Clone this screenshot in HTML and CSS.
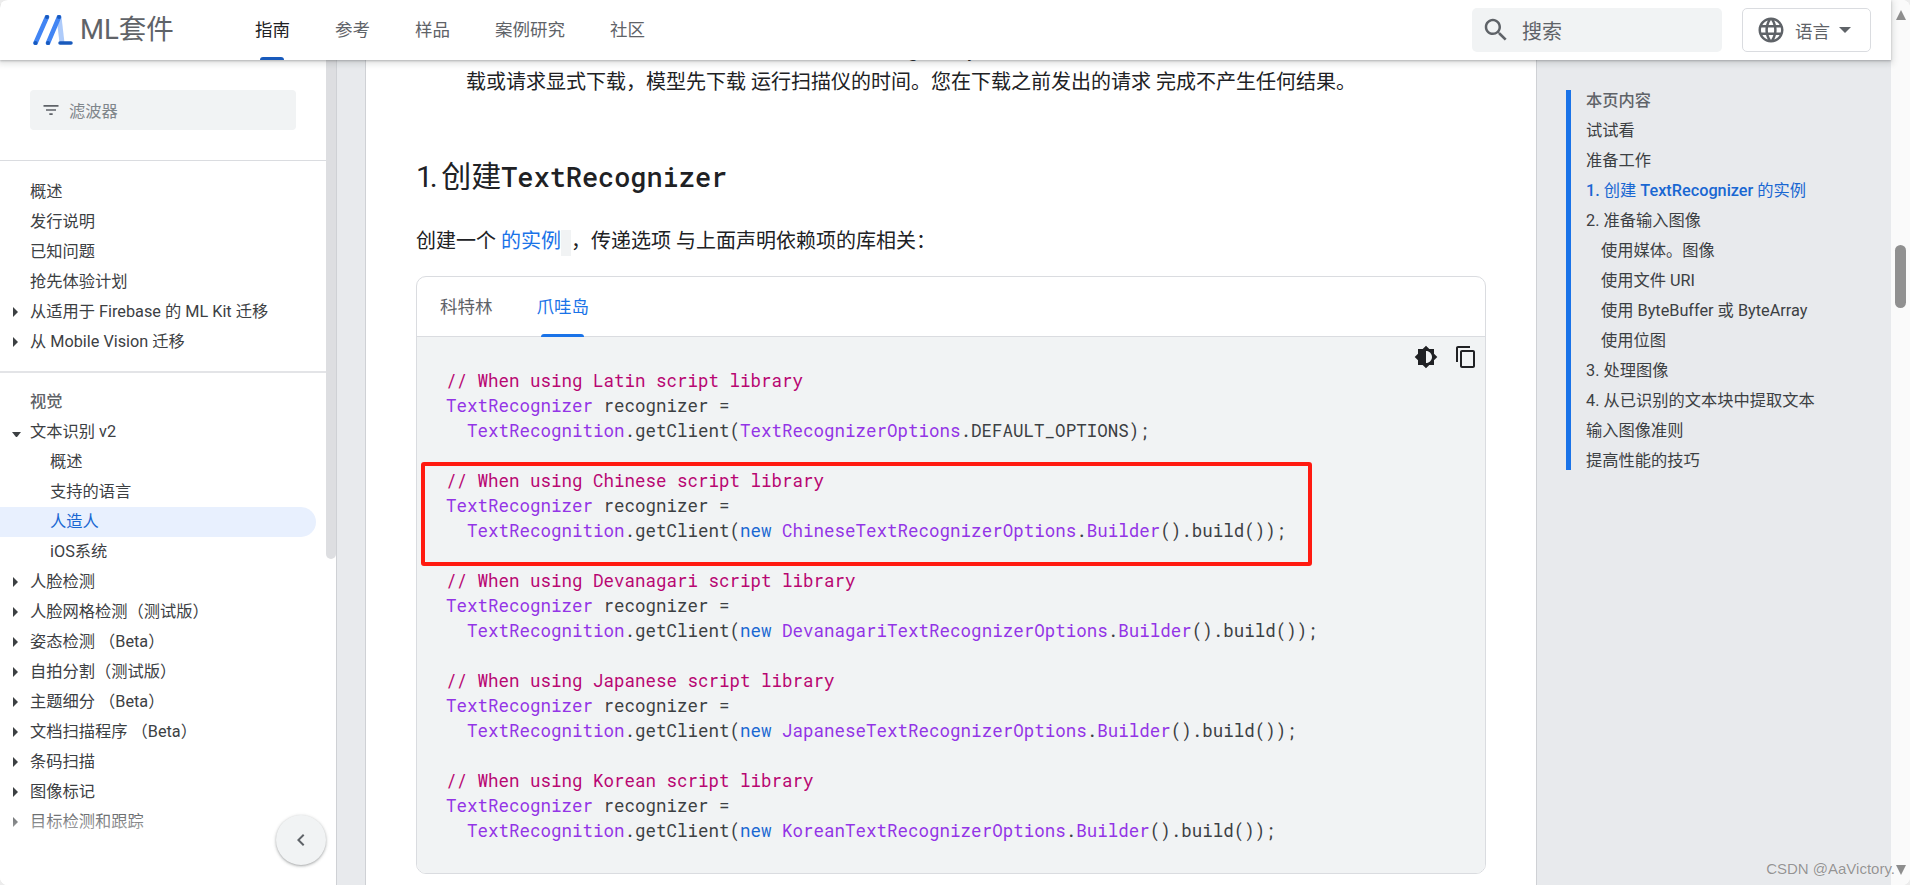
FILE: index.html
```html
<!DOCTYPE html>
<html lang="zh-CN">
<head>
<meta charset="utf-8">
<title>ML套件 - 文本识别 v2</title>
<link rel="stylesheet" href="styles.css">
</head>
<body>
<div class="page">
  <div class="main">
    <header class="topbar">
      <div class="brand">
        <svg class="brand-logo" width="40" height="30" viewBox="0 0 40 30" aria-hidden="true">
          <path d="M26 2 29 28" stroke="#aecbfa" stroke-width="5"/>
          <path d="M2.5 28 14 2" stroke="#4285f4" stroke-width="4.5" stroke-linecap="round"/>
          <path d="M15 28 26 2" stroke="#4285f4" stroke-width="4.5" stroke-linecap="round"/>
          <path d="M27 28H38" stroke="#185abc" stroke-width="3.5" stroke-linecap="round"/>
          <circle cx="2.5" cy="28" r="2" fill="#185abc"/><circle cx="15" cy="28" r="2" fill="#185abc"/>
          <circle cx="14" cy="2" r="2" fill="#185abc"/><circle cx="26" cy="2" r="2" fill="#185abc"/>
        </svg>
        <span class="brand-name">ML套件</span>
      </div>
      <nav class="tabs-top">
        <a class="top-link is-active">指南</a>
        <a class="top-link">参考</a>
        <a class="top-link">样品</a>
        <a class="top-link">案例研究</a>
        <a class="top-link">社区</a>
      </nav>
      <div class="search">
        <svg width="30" height="30" viewBox="0 0 24 24" fill="#5f6368" aria-hidden="true"><path d="M15.5 14h-.79l-.28-.27C15.41 12.59 16 11.11 16 9.5 16 5.91 13.09 3 9.5 3S3 5.91 3 9.5 5.91 16 9.5 16c1.61 0 3.09-.59 4.23-1.57l.27.28v.79l5 4.99L20.49 19l-4.99-5zm-6 0C7.01 14 5 11.99 5 9.5S7.01 5 9.5 5 14 7.01 14 9.5 11.99 14 9.5 14z"/></svg>
        <span>搜索</span>
      </div>
      <div class="lang">
        <svg width="30" height="30" viewBox="0 0 24 24" fill="#5f6368" aria-hidden="true"><path d="M11.99 2C6.47 2 2 6.48 2 12s4.47 10 9.99 10C17.52 22 22 17.52 22 12S17.52 2 11.99 2zm6.93 6h-2.95c-.32-1.25-.78-2.45-1.38-3.56 1.84.63 3.37 1.91 4.33 3.56zM12 4.04c.83 1.2 1.48 2.53 1.91 3.96h-3.82c.43-1.43 1.08-2.76 1.91-3.96zM4.26 14C4.1 13.36 4 12.69 4 12s.1-1.36.26-2h3.38c-.08.66-.14 1.32-.14 2s.06 1.34.14 2H4.26zm.82 2h2.95c.32 1.25.78 2.45 1.38 3.56-1.84-.63-3.37-1.9-4.33-3.56zm2.95-8H5.08c.96-1.66 2.49-2.93 4.33-3.56C8.81 5.55 8.35 6.75 8.03 8zM12 19.96c-.83-1.2-1.48-2.53-1.91-3.96h3.82c-.43 1.43-1.08 2.76-1.91 3.96zM14.34 14H9.66c-.09-.66-.16-1.32-.16-2s.07-1.35.16-2h4.68c.09.65.16 1.32.16 2s-.07 1.34-.16 2zm.25 5.56c.6-1.11 1.06-2.31 1.38-3.56h2.95c-.96 1.65-2.49 2.93-4.33 3.56zM16.36 14c.08-.66.14-1.32.14-2s-.06-1.34-.14-2h3.38c.16.64.26 1.31.26 2s-.1 1.36-.26 2h-3.38z"/></svg>
        <span>语言</span>
        <i class="lang-caret"></i>
      </div>
    </header>
    <div class="body-row">
      <aside class="sidebar">
        <div class="side-scroll">
          <div class="filter-wrap">
            <div class="filter">
              <svg width="20" height="20" viewBox="0 0 24 24" fill="#5f6368" aria-hidden="true"><path d="M10 18h4v-2h-4v2zM3 6v2h18V6H3zm3 7h12v-2H6v2z"/></svg>
              <span>滤波器</span>
            </div>
          </div>
          <ul class="side-list side-list-first">
            <li class="side-row">概述</li>
            <li class="side-row">发行说明</li>
            <li class="side-row">已知问题</li>
            <li class="side-row">抢先体验计划</li>
            <li class="side-row has-arrow"><i class="arrow-right"></i>从适用于 Firebase 的 ML Kit 迁移</li>
            <li class="side-row has-arrow"><i class="arrow-right"></i>从 Mobile Vision 迁移</li>
          </ul>
          <ul class="side-list side-list-second">
            <li class="side-row side-heading">视觉</li>
            <li class="side-row has-arrow"><i class="arrow-down"></i>文本识别 v2</li>
            <li class="side-row side-sub">概述</li>
            <li class="side-row side-sub">支持的语言</li>
            <li class="side-row side-sub is-current">人造人</li>
            <li class="side-row side-sub">iOS系统</li>
            <li class="side-row has-arrow"><i class="arrow-right"></i>人脸检测</li>
            <li class="side-row has-arrow"><i class="arrow-right"></i>人脸网格检测（测试版）</li>
            <li class="side-row has-arrow"><i class="arrow-right"></i>姿态检测 （Beta）</li>
            <li class="side-row has-arrow"><i class="arrow-right"></i>自拍分割（测试版）</li>
            <li class="side-row has-arrow"><i class="arrow-right"></i>主题细分 （Beta）</li>
            <li class="side-row has-arrow"><i class="arrow-right"></i>文档扫描程序 （Beta）</li>
            <li class="side-row has-arrow"><i class="arrow-right"></i>条码扫描</li>
            <li class="side-row has-arrow"><i class="arrow-right"></i>图像标记</li>
            <li class="side-row has-arrow"><i class="arrow-right"></i>目标检测和跟踪</li>
          </ul>
        </div>
        <div class="side-thumb"></div>
        <div class="side-fade"></div>
        <button class="collapse" aria-label="收起">
          <svg width="24" height="24" viewBox="0 0 24 24" fill="#5f6368" aria-hidden="true"><path d="M15.41 7.41 14 6l-6 6 6 6 1.41-1.41L10.83 12z"/></svg>
        </button>
      </aside>
      <div class="gutter"></div>
      <main class="content">
        <p class="note note-clipped">如果您没有在安装时启用模型下载，可以使用 Google Play 服务 ModuleInstallClient API 请求下</p>
        <p class="note">载或请求显式下载，模型先下载 运行扫描仪的时间。您在下载之前发出的请求 完成不产生任何结果。</p>
        <h3 class="step-title"><span class="step-num">1.</span> 创建<code>TextRecognizer</code></h3>
        <p class="intro">创建一个 <a class="link">的实例</a><span class="code-gap"></span>，传递选项 与上面声明依赖项的库相关：</p>
        <section class="code-card">
          <div class="code-tabs">
            <span class="code-tab">科特林</span>
            <span class="code-tab is-active">爪哇岛</span>
          </div>
          <div class="code-body">
            <div class="code-tools">
              <svg width="24" height="24" viewBox="0 0 24 24" fill="#202124" aria-hidden="true"><path d="M20 15.31 23.31 12 20 8.69V4h-4.69L12 .69 8.69 4H4v4.69L.69 12 4 15.31V20h4.69L12 23.31 15.31 20H20v-4.69zM12 18V6c3.31 0 6 2.69 6 6s-2.69 6-6 6z"/></svg>
              <svg width="24" height="24" viewBox="0 0 24 24" fill="#202124" aria-hidden="true"><path d="M16 1H4c-1.1 0-2 .9-2 2v14h2V3h12V1zm3 4H8c-1.1 0-2 .9-2 2v14c0 1.1.9 2 2 2h11c1.1 0 2-.9 2-2V7c0-1.1-.9-2-2-2zm0 16H8V7h11v14z"/></svg>
            </div>
            <div class="code">
              <div class="ln c">// When using Latin script library</div>
              <div class="ln"><span class="t">TextRecognizer</span> recognizer =</div>
              <div class="ln ind"><span class="t">TextRecognition</span>.getClient(<span class="t">TextRecognizerOptions</span>.DEFAULT_OPTIONS);</div>
              <div class="ln gap c">// When using Chinese script library</div>
              <div class="ln"><span class="t">TextRecognizer</span> recognizer =</div>
              <div class="ln ind"><span class="t">TextRecognition</span>.getClient(<span class="k">new</span> <span class="t">ChineseTextRecognizerOptions</span>.<span class="t">Builder</span>().build());</div>
              <div class="ln gap c">// When using Devanagari script library</div>
              <div class="ln"><span class="t">TextRecognizer</span> recognizer =</div>
              <div class="ln ind"><span class="t">TextRecognition</span>.getClient(<span class="k">new</span> <span class="t">DevanagariTextRecognizerOptions</span>.<span class="t">Builder</span>().build());</div>
              <div class="ln gap c">// When using Japanese script library</div>
              <div class="ln"><span class="t">TextRecognizer</span> recognizer =</div>
              <div class="ln ind"><span class="t">TextRecognition</span>.getClient(<span class="k">new</span> <span class="t">JapaneseTextRecognizerOptions</span>.<span class="t">Builder</span>().build());</div>
              <div class="ln gap c">// When using Korean script library</div>
              <div class="ln"><span class="t">TextRecognizer</span> recognizer =</div>
              <div class="ln ind"><span class="t">TextRecognition</span>.getClient(<span class="k">new</span> <span class="t">KoreanTextRecognizerOptions</span>.<span class="t">Builder</span>().build());</div>
            </div>
            <div class="red-box"></div>
          </div>
        </section>
      </main>
      <aside class="rail">
        <ul class="toc">
          <li class="toc-title">本页内容</li>
          <li>试试看</li>
          <li>准备工作</li>
          <li class="toc-current"><b>1.</b> 创建 <b>TextRecognizer</b> 的实例</li>
          <li>2. 准备输入图像</li>
          <li class="toc-sub">使用媒体。图像</li>
          <li class="toc-sub">使用文件 URI</li>
          <li class="toc-sub">使用 ByteBuffer 或 ByteArray</li>
          <li class="toc-sub">使用位图</li>
          <li>3. 处理图像</li>
          <li>4. 从已识别的文本块中提取文本</li>
          <li>输入图像准则</li>
          <li>提高性能的技巧</li>
        </ul>
      </aside>
    </div>
  </div>
  <div class="page-scroll">
    <i class="scroll-up"></i>
    <div class="scroll-thumb"></div>
    <i class="scroll-down"></i>
  </div>
  <div class="watermark">CSDN @AaVictory.</div>
</div>
</body>
</html>
```

FILE: styles.css
```css
* { box-sizing: border-box; }
html, body { margin: 0; height: 100%; background: #ececec; }
body {
  font-family: Roboto, "Noto Sans CJK SC", sans-serif;
  color: #202124;
  overflow: hidden;
}
ul { list-style: none; margin: 0; padding: 0; }
p, h3 { margin: 0; }

.page {
  position: relative;
  display: flex;
  width: 1910px;
  height: 885px;
  border-radius: 8px;
  overflow: hidden;
  background: #fff;
}
.main { width: 1891px; display: flex; flex-direction: column; }

/* top bar */
.topbar {
  position: relative;
  z-index: 5;
  flex: none;
  height: 60px;
  display: flex;
  align-items: center;
  padding: 0 20px 0 33px;
  background: #fff;
  box-shadow: 0 1px 2px rgba(60,64,67,.3), 0 2px 6px 2px rgba(60,64,67,.15);
}
.brand { display: flex; align-items: center; gap: 7px; width: 222px; }
.brand-logo { display: block; }
.brand-name { font-size: 27.5px; color: #5f6368; line-height: 40px; }
.tabs-top { display: flex; gap: 45px; height: 60px; }
.top-link {
  position: relative;
  font-size: 17.5px;
  line-height: 60px;
  color: #5f6368;
}
.top-link.is-active { color: #202124; }
.top-link.is-active::after {
  content: "";
  position: absolute;
  left: 5px; right: 6px; bottom: 0;
  height: 3px;
  background: #185abc;
  border-radius: 3px 3px 0 0;
}
.search {
  margin-left: auto;
  width: 250px;
  height: 44px;
  display: flex;
  align-items: center;
  gap: 11px;
  padding-left: 9px;
  border-radius: 5px;
  background: #f1f3f4;
  font-size: 20px;
  color: #5f6368;
}
.lang {
  margin-left: 20px;
  width: 129px;
  height: 44px;
  display: flex;
  align-items: center;
  gap: 9px;
  padding-left: 13px;
  border: 1px solid #dadce0;
  border-radius: 5px;
  font-size: 17.5px;
  color: #5f6368;
}
.lang-caret {
  margin-left: 0;
  border-left: 6px solid transparent;
  border-right: 6px solid transparent;
  border-top: 6px solid #5f6368;
}

.body-row { flex: 1; display: flex; min-height: 0; }

/* sidebar */
.sidebar {
  position: relative;
  flex: none;
  width: 336px;
  display: flex;
  overflow: hidden;
  background: #fff;
}
.side-scroll { width: 326px; font-size: 16.25px; color: #3c4043; }
.filter-wrap { padding: 30px 30px; border-bottom: 1px solid #dadce0; }
.filter {
  height: 40px;
  display: flex;
  align-items: center;
  gap: 8px;
  padding-left: 11px;
  background: #f1f3f4;
  border-radius: 4px;
  color: #80868b;
}
.side-list-first { padding: 16px 0 14px; border-bottom: 2px solid #e3e4e7; }
.side-list-second { padding: 14px 0 15px; }
.side-row { height: 30px; line-height: 30px; padding-left: 30px; white-space: nowrap; }
.has-arrow { display: flex; align-items: center; padding-left: 13px; }
.arrow-right {
  flex: none;
  width: 17px;
  height: 0;
  border-top: 5px solid transparent;
  border-bottom: 5px solid transparent;
  border-left: 5px solid #3c4043;
  border-right: 12px solid transparent;
}
.arrow-down {
  flex: none;
  width: 9px;
  height: 0;
  margin: 5px 9px 0 -1px;
  border-top: 5px solid #3c4043;
  border-left: 4.5px solid transparent;
  border-right: 4.5px solid transparent;
}
.side-heading { font-weight: 500; color: #5f6368; }
.side-sub { padding-left: 50px; }
.is-current {
  width: 316px;
  background: #e8f0fe;
  color: #1967d2;
  border-radius: 0 15px 15px 0;
}
.side-thumb {
  flex: none;
  width: 10px;
  height: 499px;
  background: #dddee1;
  border-radius: 0 0 5px 5px;
}
.side-fade {
  position: absolute;
  left: 0; right: 0; bottom: 0;
  height: 85px;
  background: linear-gradient(rgba(255,255,255,0), #fff 70%);
}
.collapse {
  position: absolute;
  left: 276px;
  top: 755px;
  width: 50px;
  height: 50px;
  display: flex;
  align-items: center;
  justify-content: center;
  padding: 0;
  border: 0;
  border-radius: 50%;
  background: #f1f3f4;
  box-shadow: 0 1px 2px rgba(60,64,67,.3), 0 1px 3px 1px rgba(60,64,67,.15);
}

.gutter {
  flex: none;
  width: 30px;
  background: #e8eaed;
  border-left: 1px solid #cfd1d5;
  border-right: 1px solid #cfd1d5;
}

/* content */
.content {
  flex: none;
  width: 1170px;
  padding: 0 50px;
  background: #fff;
  overflow: hidden;
}
.note { padding-left: 50px; font-size: 20px; line-height: 30px; white-space: nowrap; }
.note-clipped { margin-top: -25px; margin-bottom: 2px; }
.step-title {
  margin-top: 60px;
  font-size: 30px;
  font-weight: 400;
  line-height: 40px;
  word-spacing: -1px;
}
.step-num { letter-spacing: -3px; }
.step-title code {
  font-family: "Roboto Mono", "DejaVu Sans Mono", monospace;
  font-size: 26.9px;
  font-weight: 500;
}
.intro { margin-top: 29px; font-size: 20px; line-height: 30px; }
.link { color: #1a73e8; }
.code-gap {
  display: inline-block;
  width: 10px;
  height: 26px;
  vertical-align: middle;
  background: #f1f3f4;
}

.code-card {
  margin-top: 20px;
  height: 598px;
  border: 1px solid #dadce0;
  border-radius: 10px;
  overflow: hidden;
}
.code-tabs {
  height: 60px;
  display: flex;
  gap: 44px;
  padding-left: 23px;
  border-bottom: 1px solid #dadce0;
}
.code-tab {
  position: relative;
  font-size: 17.5px;
  line-height: 60px;
  color: #5f6368;
}
.code-tab.is-active { color: #1a73e8; }
.code-tab.is-active::after {
  content: "";
  position: absolute;
  left: 4px; right: 5px; bottom: -1px;
  height: 3px;
  background: #1a73e8;
  border-radius: 3px 3px 0 0;
}
.code-body {
  position: relative;
  height: 537px;
  background: #f1f3f4;
  padding: 31px 0 0 29px;
}
.code-tools {
  position: absolute;
  top: 8px;
  right: 7px;
  display: flex;
  gap: 16px;
}
.code {
  font-family: "Roboto Mono", "DejaVu Sans Mono", monospace;
  font-size: 17.5px;
  line-height: 25px;
  color: #3c4043;
}
.ln { height: 25px; white-space: pre; }
.ln.ind { padding-left: 21px; }
.ln.gap { margin-top: 25px; }
.c { color: #b80672; }
.t { color: #9334e6; }
.k { color: #1967d2; }
.red-box {
  position: absolute;
  left: 4px;
  top: 125px;
  width: 891px;
  height: 104px;
  border: 4px solid #ff1a10;
  border-radius: 3px;
}

/* right rail */
.rail {
  flex: 1;
  padding: 30px 0 0 29px;
  background: #e8eaed;
  border-left: 1px solid #cfd1d5;
}
.toc {
  display: flex;
  flex-direction: column;
  gap: 10px;
  height: 380px;
  padding: 0.5px 0 0 15px;
  border-left: 5px solid #1a73e8;
  font-size: 16.25px;
  line-height: 20px;
  color: #3c4043;
}
.toc-title { font-weight: 500; color: #5f6368; }
.toc-current { color: #1967d2; }
.toc-current b { font-weight: 500; }
.toc-sub { padding-left: 15px; }

/* page scrollbar */
.page-scroll {
  flex: none;
  width: 19px;
  display: flex;
  flex-direction: column;
  align-items: center;
  padding: 10px 0;
  background: #fafafa;
}
.scroll-up, .scroll-down {
  width: 0;
  height: 0;
  border-left: 5.5px solid transparent;
  border-right: 5.5px solid transparent;
}
.scroll-up { border-bottom: 10px solid #8d8d8d; }
.scroll-down { margin-top: auto; border-top: 10px solid #8d8d8d; }
.scroll-thumb {
  width: 11px;
  height: 63px;
  margin-top: 225px;
  border-radius: 6px;
  background: #909090;
}
.watermark {
  position: absolute;
  right: 15px;
  bottom: 6px;
  font-family: "Liberation Sans", sans-serif;
  font-size: 15px;
  line-height: 20px;
  color: #949494;
  text-shadow: 0 0 1px #fff;
}
```
